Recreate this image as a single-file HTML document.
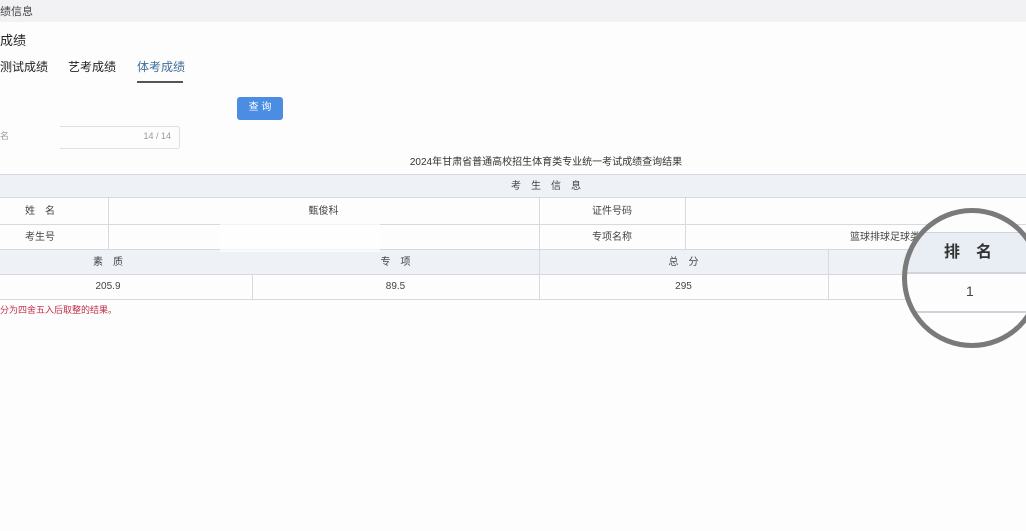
<!DOCTYPE html>
<html><head><meta charset="utf-8"><style>
*{margin:0;padding:0;box-sizing:border-box}
body{width:1026px;height:531px;overflow:hidden;background:#fdfdfe;font-family:"Liberation Sans","Noto Sans CJK SC",sans-serif;color:#333;position:relative}
.a{position:absolute;white-space:nowrap}
.hl{position:absolute;height:1px;background:#d6dae0}
.vl{position:absolute;width:1px;background:#d6dae0}
.band{position:absolute;background:#eef2f7}
.c{position:absolute;font-size:10px;text-align:center;color:#444;line-height:12px}
</style></head><body>
<div class="a" style="left:0;top:0;width:1026px;height:22px;background:#f2f2f5"></div>
<div class="a" style="left:0;top:3px;font-size:11px;color:#444">绩信息</div>
<div class="a" style="left:0;top:30px;font-size:13px;color:#222">成绩</div>
<div class="a" style="left:0;top:58px;font-size:12px;color:#222">测试成绩</div>
<div class="a" style="left:68px;top:58px;font-size:12px;color:#222">艺考成绩</div>
<div class="a" style="left:137px;top:58px;font-size:12px;color:#3f6f98">体考成绩</div>
<div class="a" style="left:137px;top:81px;width:46px;height:2px;background:#555"></div>
<div class="a" style="left:237px;top:97px;width:46px;height:23px;background:#4a8de2;border-radius:3px;color:#fff;font-size:10px;text-align:center;line-height:21px">查 询</div>
<div class="a" style="left:0;top:129px;font-size:9px;color:#999">名</div>
<div class="a" style="left:60px;top:126px;width:120px;height:23px;border:1px solid #e0e0e0;border-left:none;border-radius:0 3px 3px 0;font-size:9px;color:#999;text-align:right;padding-right:8px;line-height:19px">14 / 14</div>
<div class="a" style="left:0;top:153px;width:1092px;text-align:center;font-size:10px;color:#333">2024年甘肃省普通高校招生体育类专业统一考试成绩查询结果</div>

<div class="band" style="left:0;top:175px;width:1026px;height:22px"></div>
<div class="band" style="left:0;top:249px;width:1026px;height:25px"></div>
<div class="hl" style="left:0;top:174px;width:1026px"></div>
<div class="hl" style="left:0;top:197px;width:1026px"></div>
<div class="hl" style="left:0;top:224px;width:1026px"></div>
<div class="hl" style="left:0;top:249px;width:1026px"></div>
<div class="hl" style="left:0;top:274px;width:1026px"></div>
<div class="hl" style="left:0;top:299px;width:1026px"></div>
<div class="vl" style="left:108px;top:197px;height:52px"></div>
<div class="vl" style="left:539px;top:197px;height:102px"></div>
<div class="vl" style="left:685px;top:197px;height:52px"></div>
<div class="vl" style="left:252px;top:274px;height:25px"></div>
<div class="vl" style="left:828px;top:249px;height:50px"></div>
<div class="a" style="left:220px;top:222px;width:160px;height:30px;background:#fdfdfe;opacity:.7"></div>

<div class="c" style="left:0;top:181px;width:1092px">考　生　信　息</div>
<div class="c" style="left:0;top:206px;width:80px">姓　名</div>
<div class="c" style="left:108px;top:206px;width:431px">甄俊科</div>
<div class="c" style="left:539px;top:206px;width:146px">证件号码</div>
<div class="c" style="left:0;top:232px;width:80px">考生号</div>
<div class="c" style="left:539px;top:232px;width:146px">专项名称</div>
<div class="a" style="left:850px;top:232px;font-size:10px;color:#444;line-height:12px">篮球排球足球类</div>
<div class="c" style="left:0;top:257px;width:216px">素　质</div>
<div class="c" style="left:252px;top:257px;width:287px">专　项</div>
<div class="c" style="left:539px;top:257px;width:289px">总　分</div>
<div class="c" style="left:0;top:281px;width:216px">205.9</div>
<div class="c" style="left:252px;top:281px;width:287px">89.5</div>
<div class="c" style="left:539px;top:281px;width:289px">295</div>
<div class="a" style="left:0;top:303px;font-size:9px;color:#c0304a">分为四舍五入后取整的结果。</div>

<div class="a" style="left:904px;top:210px;width:136px;height:136px;border-radius:50%;overflow:hidden;background:#fdfdfe">
 <div class="a" style="left:0;top:22px;width:140px;height:40px;background:#e9eef5"></div>
 <div class="a" style="left:0;top:22px;width:140px;height:1px;background:#cfd4db"></div>
 <div class="a" style="left:0;top:62px;width:140px;height:2px;background:#cfd4db"></div>
 <div class="a" style="left:0;top:101px;width:140px;height:2px;background:#cfd4db"></div>
 <div class="a" style="left:40px;top:33px;font-size:16px;color:#333;font-weight:bold;line-height:20px">排　名</div>
 <div class="a" style="left:62px;top:73px;font-size:14px;color:#444;line-height:16px">1</div>
</div>
<div class="a" style="left:902px;top:208px;width:140px;height:140px;border-radius:50%;border:5px solid #7a7a7a"></div>
</body></html>
